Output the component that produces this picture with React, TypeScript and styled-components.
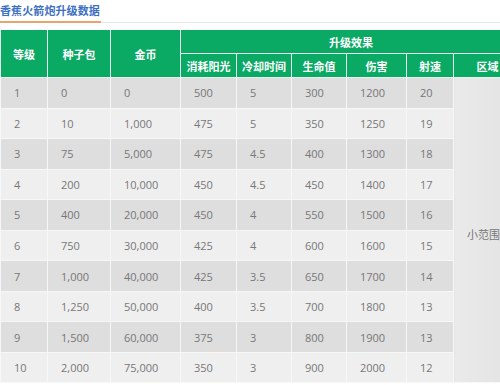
import React from "react";
import styled, { createGlobalStyle } from "styled-components";

const Global = createGlobalStyle`
  html, body { margin: 0; padding: 0; background: #fff; overflow: hidden; }
  body { font-family: "Open Sans", "Noto Sans CJK SC", sans-serif; }
`;

const Page = styled.div`
  width: 500px;
  height: 385px;
  overflow: hidden;
`;

const TitleBar = styled.div`
  height: 22px;
  border-bottom: 1px solid #e8e8e8;
  display: flex;
  align-items: flex-end;
  margin-bottom: 7px;
`;

const Title = styled.h3`
  margin: 0 0 -1px 0;
  padding: 0 0 3px 0;
  width: 101px;
  font-family: "Noto Sans CJK SC", sans-serif;
  font-size: 11px;
  line-height: 16px;
  font-weight: 700;
  color: #3d6fc2;
  border-bottom: 2px solid #e8a66e;
  white-space: nowrap;
  letter-spacing: 0.1px;
`;

const Table = styled.table`
  width: 521px;
  table-layout: fixed;
  border-collapse: collapse;
  font-size: 11px;
`;

const HeadCell = styled.th`
  background: #0aa964;
  color: #fff;
  font-family: "Noto Sans CJK SC", sans-serif;
  font-weight: 700;
  font-size: 11px;
  height: 23px;
  padding: 0;
  text-align: center;
  border: 1px solid #e9f6ef;
  border-top: none;
`;

const Row = styled.tr<{ $odd: boolean }>`
  background: ${(p) => (p.$odd ? "#dedede" : "#efefef")};
`;

const Cell = styled.td`
  height: 29.55px;
  padding: 0 0 0 13px;
  color: #777;
  font-family: "Open Sans", sans-serif;
  font-size: 11px;
  text-align: left;
  border: 1px solid #f7f7f7;
  border-top: none;
  white-space: nowrap;
`;

const AreaCell = styled(Cell)`
  background: linear-gradient(90deg, #eaeaea 0%, #e2e2e2 100%);
  font-family: "Noto Sans CJK SC", sans-serif;
  padding-top: 8px;
`;

const widths = [47, 63, 70, 56, 55, 55, 60, 47, 68];

const rows: string[][] = [
  ["1", "0", "0", "500", "5", "300", "1200", "20"],
  ["2", "10", "1,000", "475", "5", "350", "1250", "19"],
  ["3", "75", "5,000", "475", "4.5", "400", "1300", "18"],
  ["4", "200", "10,000", "450", "4.5", "450", "1400", "17"],
  ["5", "400", "20,000", "450", "4", "550", "1500", "16"],
  ["6", "750", "30,000", "425", "4", "600", "1600", "15"],
  ["7", "1,000", "40,000", "425", "3.5", "650", "1700", "14"],
  ["8", "1,250", "50,000", "400", "3.5", "700", "1800", "13"],
  ["9", "1,500", "60,000", "375", "3", "800", "1900", "13"],
  ["10", "2,000", "75,000", "350", "3", "900", "2000", "12"],
];

const subHeads = ["消耗阳光", "冷却时间", "生命值", "伤害", "射速", "区域"];

export default function App() {
  return (
    <Page>
      <Global />
      <TitleBar>
        <Title>香蕉火箭炮升级数据</Title>
      </TitleBar>
      <Table>
        <colgroup>
          {widths.map((w, i) => (
            <col key={i} style={{ width: w }} />
          ))}
        </colgroup>
        <thead>
          <tr>
            <HeadCell rowSpan={2}>等级</HeadCell>
            <HeadCell rowSpan={2}>种子包</HeadCell>
            <HeadCell rowSpan={2}>金币</HeadCell>
            <HeadCell colSpan={6}>升级效果</HeadCell>
          </tr>
          <tr>
            {subHeads.map((h) => (
              <HeadCell key={h}>{h}</HeadCell>
            ))}
          </tr>
        </thead>
        <tbody>
          {rows.map((r, i) => (
            <Row key={i} $odd={i % 2 === 0}>
              {r.map((v, j) => (
                <Cell key={j}>{v}</Cell>
              ))}
              {i === 0 && <AreaCell rowSpan={10}>小范围</AreaCell>}
            </Row>
          ))}
        </tbody>
      </Table>
    </Page>
  );
}
